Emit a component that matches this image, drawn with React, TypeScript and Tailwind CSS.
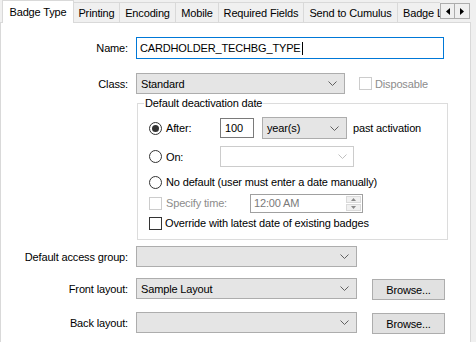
const font = { fontFamily: '"Liberation Sans", Arial, sans-serif' };

function Chevron({ color = '#606060' }: { color?: string }) {
  return (
    <svg width="9" height="5" viewBox="0 0 9 5" className="shrink-0">
      <polyline points="0.5,0.5 4.5,4.5 8.5,0.5" fill="none" stroke={color} strokeWidth="1" />
    </svg>
  );
}

function Combo({ w, text, h = 'h-[21px]' }: { w: string; text?: string; h?: string }) {
  return (
    <div className={`${w} ${h} shrink-0 flex items-center justify-between border border-[#adadad] bg-[#e5e5e5] pl-[4px] pr-[7px]`}>
      <span>{text}</span>
      <Chevron />
    </div>
  );
}

function Radio({ checked = false }: { checked?: boolean }) {
  return (
    <div className="w-[13px] h-[13px] rounded-full border border-[#333] bg-white flex items-center justify-center shrink-0">
      {checked && <div className="w-[7px] h-[7px] rounded-full bg-[#333]" />}
    </div>
  );
}

function Check({ disabled = false }: { disabled?: boolean }) {
  return (
    <div
      className={`w-[13px] h-[13px] shrink-0 bg-white border ${disabled ? 'border-[#cccccc]' : 'border-[#333]'}`}
    />
  );
}

function Browse() {
  return (
    <div className="w-[73px] h-[21px] ml-[15px] border border-[#adadad] bg-[#e1e1e1] flex items-center justify-center">
      Browse...
    </div>
  );
}

const tabs = [
  { label: 'Printing', w: 'w-[46px]' },
  { label: 'Encoding', w: 'w-[56px]' },
  { label: 'Mobile', w: 'w-[43px]' },
  { label: 'Required Fields', w: 'w-[85px]' },
  { label: 'Send to Cumulus', w: 'w-[94px]' },
];

export default function App() {
  return (
    <div
      className="w-[476px] h-[342px] bg-[#f0f0f0] overflow-hidden text-[11px] tracking-[-0.15px] text-black leading-[14px]"
      style={font}
    >
      <div className="w-[471px] h-full flex flex-col">
        {/* Tab strip */}
        <div className="relative z-10 h-[22px] flex items-end shrink-0">
          <div className="w-[440px] h-[23px] -mb-[1px] pl-[2px] flex items-end overflow-hidden shrink-0">
            <div className="w-[72px] h-[23px] shrink-0 bg-white border border-b-0 border-[#d9d9d9] flex items-start justify-center pt-[4px]">
              Badge Type
            </div>
            {tabs.map((t) => (
              <div
                key={t.label}
                className={`${t.w} h-[20px] mb-[1px] shrink-0 border-t border-r border-[#d9d9d9] bg-[#f0f0f0] flex items-center justify-center whitespace-nowrap`}
              >
                {t.label}
              </div>
            ))}
            <div className="w-[75px] h-[20px] mb-[1px] shrink-0 border-t border-[#d9d9d9] bg-[#f0f0f0] flex items-center pl-[5px] whitespace-nowrap">
              Badge Layout
            </div>
          </div>
          {/* Scroll arrows */}
          <div className="self-start mt-[3px] flex shrink-0">
            <div className="w-[15px] h-[16px] border border-[#adadad] bg-[#f0f0f0] flex items-center justify-center">
              <svg width="4" height="7" viewBox="0 0 4 7">
                <polygon points="4,0 0,3.5 4,7" fill="#000" />
              </svg>
            </div>
            <div className="w-[15px] h-[16px] border border-l-0 border-[#adadad] bg-[#f0f0f0] flex items-center justify-center">
              <svg width="4" height="7" viewBox="0 0 4 7">
                <polygon points="0,0 4,3.5 0,7" fill="#000" />
              </svg>
            </div>
          </div>
        </div>

        {/* Panel */}
        <div className="flex-1 bg-white border border-b-0 border-[#d9d9d9] flex flex-col">
          {/* Name */}
          <div className="flex items-center mt-[14px] h-[22px]">
            <div className="w-[127px] text-right">Name:</div>
            <div className="ml-[8px] w-[308px] h-[22px] border border-[#0078d7] flex items-center pl-[3px]">
              CARDHOLDER_TECHBG_TYPE
              <span className="w-[1px] h-[13px] bg-black ml-[1px]" />
            </div>
          </div>

          {/* Class */}
          <div className="flex items-center mt-[14px] h-[21px]">
            <div className="w-[127px] text-right">Class:</div>
            <div className="ml-[8px]">
              <Combo w="w-[209px]" text="Standard" />
            </div>
            <div className="ml-[14px] flex items-center gap-[3px] text-[#8c8c8c]">
              <Check disabled />
              <span>Disposable</span>
            </div>
          </div>

          {/* Default deactivation date */}
          <fieldset className="ml-[136px] mt-[2px] w-[311px] border border-[#dcdcdc] pl-[11px] pb-[9px]">
            <legend className="-ml-[5px] px-[1px] leading-[14px]">Default deactivation date</legend>

            <div className="flex items-center mt-[7px] h-[22px]">
              <div className="w-[71px] flex items-center gap-[4px]">
                <Radio checked />
                <span>After:</span>
              </div>
              <div className="w-[34px] h-[20px] border border-[#7a7a7a] flex items-center pl-[4px]">100</div>
              <div className="ml-[8px]">
                <Combo w="w-[85px]" text="year(s)" h="h-[22px]" />
              </div>
              <span className="ml-[6px]">past activation</span>
            </div>

            <div className="flex items-center mt-[7px] h-[21px]">
              <div className="w-[71px] flex items-center gap-[4px]">
                <Radio />
                <span>On:</span>
              </div>
              <div className="w-[134px] h-[21px] border border-[#cccccc] bg-white flex items-center justify-end pr-[6px]">
                <Chevron color="#c0c0c0" />
              </div>
            </div>

            <div className="flex items-center mt-[8px] h-[14px] gap-[4px]">
              <Radio />
              <span>No default (user must enter a date manually)</span>
            </div>

            <div className="flex items-center mt-[4px] h-[20px]">
              <div className="w-[101px] flex items-center gap-[4px] text-[#8c8c8c]">
                <Check disabled />
                <span>Specify time:</span>
              </div>
              <div className="w-[113px] h-[19px] border border-[#a0a0a0] bg-white flex items-center justify-between pl-[3px] pr-[1px] text-[#7a7a7a]">
                <span>12:00 AM</span>
                <div className="flex flex-col gap-[1px]">
                  <div className="w-[15px] h-[7px] bg-[#f0f0f0] border border-[#dadada] flex items-center justify-center">
                    <svg width="5" height="3" viewBox="0 0 5 3">
                      <polygon points="0,3 2.5,0 5,3" fill="#8a8a8a" />
                    </svg>
                  </div>
                  <div className="w-[15px] h-[7px] bg-[#f0f0f0] border border-[#dadada] flex items-center justify-center">
                    <svg width="5" height="3" viewBox="0 0 5 3">
                      <polygon points="0,0 2.5,3 5,0" fill="#8a8a8a" />
                    </svg>
                  </div>
                </div>
              </div>
            </div>

            <div className="flex items-center mt-[3px] h-[14px] gap-[3px]">
              <Check />
              <span>Override with latest date of existing badges</span>
            </div>
          </fieldset>

          {/* Default access group */}
          <div className="flex items-center mt-[6px] h-[21px]">
            <div className="w-[127px] text-right">Default access group:</div>
            <div className="ml-[8px]">
              <Combo w="w-[221px]" />
            </div>
          </div>

          {/* Front layout */}
          <div className="flex items-start mt-[11px] h-[22px]">
            <div className="w-[127px] text-right self-center">Front layout:</div>
            <div className="ml-[8px]">
              <Combo w="w-[221px]" text="Sample Layout" />
            </div>
            <div className="self-end">
              <Browse />
            </div>
          </div>

          {/* Back layout */}
          <div className="flex items-start mt-[12px] h-[22px]">
            <div className="w-[127px] text-right self-center">Back layout:</div>
            <div className="ml-[8px]">
              <Combo w="w-[221px]" />
            </div>
            <div className="self-end">
              <Browse />
            </div>
          </div>
        </div>
      </div>
    </div>
  );
}
